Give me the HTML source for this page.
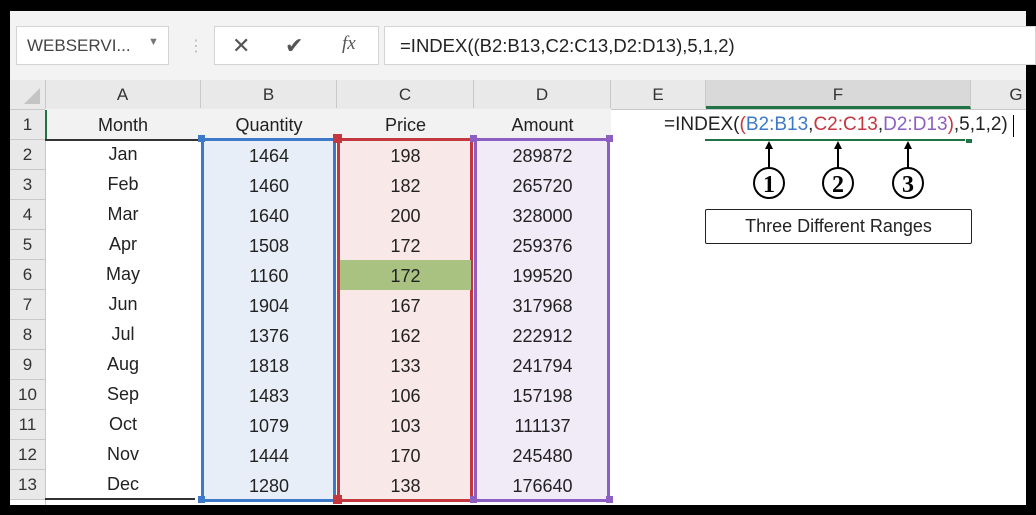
<!DOCTYPE html>
<html><head><style>
body{margin:0;width:1036px;height:515px;background:#000;position:relative;overflow:hidden;font-family:"Liberation Sans","DejaVu Sans",sans-serif}
.a{position:absolute}
.c{position:absolute;text-align:center;font-size:18px;color:#222;line-height:30px}
.rh{position:absolute;left:10px;width:35px;text-align:center;font-size:17px;color:#333;background:#e9e9e9;border-bottom:1px solid #c8c8c8;line-height:29px;height:29px}
.ch{position:absolute;top:80px;height:28px;line-height:30px;text-align:center;font-size:17px;color:#333;border-right:1px solid #c8c8c8}
.h{position:absolute;top:109px;height:30px;background:#f2f2f2}
.sq{position:absolute;width:7px;height:7px}
</style></head><body>
<div class="a" style="left:10px;top:11px;width:1016px;height:494px;background:#fff"></div>
<div class="a" style="left:10px;top:11px;width:1016px;height:97px;background:#f3f3f3"></div>
<div class="a" style="left:16px;top:26px;width:151px;height:37px;background:#fff;border:1px solid #d4d4d4"></div>
<div class="a" style="left:27px;top:36px;font-size:17px;color:#444">WEBSERVI...</div>
<div class="a" style="left:148px;top:36px;font-size:11px;color:#777">▼</div>
<div class="a" style="left:188px;top:36px;font-size:16px;color:#bbb">⋮</div>
<div class="a" style="left:214px;top:26px;width:163px;height:37px;background:#fff;border:1px solid #d4d4d4"></div>
<div class="a" style="left:232px;top:33px;font-size:22px;color:#555">✕</div>
<div class="a" style="left:285px;top:33px;font-size:22px;color:#555">✔</div>
<div class="a" style="left:342px;top:33px;font-size:19px;color:#555;font-family:'Liberation Serif',serif;font-style:italic">fx</div>
<div class="a" style="left:384px;top:26px;width:650px;height:37px;background:#fff;border:1px solid #d4d4d4"></div>
<div class="a" style="left:400px;top:35px;font-size:18.5px;color:#222">=INDEX((B2:B13,C2:C13,D2:D13),5,1,2)</div>
<div class="a" style="left:10px;top:80px;width:1016px;height:29px;background:#e9e9e9;border-bottom:1px solid #c8c8c8"></div>
<svg class="a" style="left:22px;top:88px" width="20" height="18"><polygon points="18,0 18,16 2,16" fill="#c4c4c4"/></svg>
<div class="ch" style="left:45px;width:155px">A</div>
<div class="ch" style="left:201px;width:135px">B</div>
<div class="ch" style="left:337px;width:136px">C</div>
<div class="ch" style="left:474px;width:136px">D</div>
<div class="ch" style="left:611px;width:94px">E</div>
<div class="ch" style="left:706px;width:264px;background:#d9d9d9;border-bottom:3px solid #217346;height:26px">F</div>
<div class="ch" style="left:971px;width:90px;border:none">G</div>
<div class="a" style="left:45px;top:80px;width:1px;height:425px;background:#c8c8c8"></div>
<div class="h" style="left:45px;width:156px"></div>
<div class="h" style="left:201px;width:136px"></div>
<div class="h" style="left:337px;width:137px"></div>
<div class="h" style="left:474px;width:137px"></div>
<div class="a" style="left:45px;top:110px;width:2px;height:29px;background:#217346"></div>
<div class="a" style="left:45px;top:139px;width:155px;height:2px;background:#333"></div>
<div class="a" style="left:45px;top:498px;width:150px;height:2px;background:#333"></div>
<div class="a" style="left:201px;top:138px;width:129px;height:358px;background:#e8eef8;border:3px solid #3d78c9"></div>
<div class="a" style="left:337px;top:138px;width:130px;height:358px;background:#f9e8e8;border:3px solid #c4373f"></div>
<div class="a" style="left:340px;top:260px;width:131px;height:30px;background:#a9c282"></div>
<div class="a" style="left:474px;top:138px;width:130px;height:358px;background:#f0ebf7;border:3px solid #8e5fc2"></div>
<div class="sq" style="left:198px;top:135px;background:#3d78c9"></div><div class="sq" style="left:198px;top:496px;background:#3d78c9"></div>
<div class="sq" style="left:333px;top:134px;width:9px;height:9px;background:#c4373f"></div><div class="sq" style="left:333px;top:495px;width:9px;height:9px;background:#c4373f"></div>
<div class="sq" style="left:470px;top:135px;background:#8e5fc2"></div><div class="sq" style="left:470px;top:496px;background:#8e5fc2"></div>
<div class="sq" style="left:606px;top:135px;background:#8e5fc2"></div><div class="sq" style="left:606px;top:496px;background:#8e5fc2"></div>
<div class="rh" style="top:110px">1</div><div class="rh" style="top:140px">2</div><div class="rh" style="top:170px">3</div><div class="rh" style="top:200px">4</div><div class="rh" style="top:230px">5</div><div class="rh" style="top:260px">6</div><div class="rh" style="top:290px">7</div><div class="rh" style="top:320px">8</div><div class="rh" style="top:350px">9</div><div class="rh" style="top:380px">10</div><div class="rh" style="top:410px">11</div><div class="rh" style="top:440px">12</div><div class="rh" style="top:470px">13</div>
<div class="c" style="left:45px;top:110px;width:156px">Month</div><div class="c" style="left:201px;top:110px;width:136px">Quantity</div><div class="c" style="left:337px;top:110px;width:137px">Price</div><div class="c" style="left:474px;top:110px;width:137px">Amount</div>
<div class="c" style="left:45px;top:139px;width:156px">Jan<br>Feb<br>Mar<br>Apr<br>May<br>Jun<br>Jul<br>Aug<br>Sep<br>Oct<br>Nov<br>Dec</div>
<div class="c" style="left:201px;top:141px;width:136px">1464<br>1460<br>1640<br>1508<br>1160<br>1904<br>1376<br>1818<br>1483<br>1079<br>1444<br>1280</div>
<div class="c" style="left:337px;top:141px;width:137px">198<br>182<br>200<br>172<br>172<br>167<br>162<br>133<br>106<br>103<br>170<br>138</div>
<div class="c" style="left:474px;top:141px;width:137px">289872<br>265720<br>328000<br>259376<br>199520<br>317968<br>222912<br>241794<br>157198<br>111137<br>245480<br>176640</div>
<div class="a" style="left:664px;top:114px;font-size:19px;color:#222;white-space:nowrap">=INDEX(<span style="color:#c4373f">(</span><span style="color:#3d78c9">B2:B13</span>,<span style="color:#c4373f">C2:C13</span>,<span style="color:#8e5fc2">D2:D13</span><span style="color:#c4373f">)</span>,5,1,2)</div>
<div class="a" style="left:1013px;top:115px;width:1px;height:22px;background:#000"></div>
<div class="a" style="left:705px;top:139px;width:260px;height:2px;background:#217346"></div>
<div class="a" style="left:966px;top:139px;width:6px;height:4px;background:#217346"></div>
<svg class="a" style="left:740px;top:140px" width="200" height="60">
<g stroke="#000" stroke-width="2" fill="none">
<line x1="29" y1="6" x2="29" y2="28"/><line x1="98" y1="6" x2="98" y2="28"/><line x1="168" y1="6" x2="168" y2="28"/>
<circle cx="29" cy="43" r="15"/><circle cx="98" cy="43" r="15"/><circle cx="168" cy="43" r="15"/></g>
<g fill="#000"><polygon points="29,1 25,9 33,9"/><polygon points="98,1 94,9 102,9"/><polygon points="168,1 164,9 172,9"/>
<text x="29" y="52" font-size="24" font-weight="bold" text-anchor="middle" font-family="Liberation Serif,serif">1</text>
<text x="98" y="52" font-size="24" font-weight="bold" text-anchor="middle" font-family="Liberation Serif,serif">2</text>
<text x="168" y="52" font-size="24" font-weight="bold" text-anchor="middle" font-family="Liberation Serif,serif">3</text></g></svg>
<div class="a" style="left:705px;top:209px;width:265px;height:33px;border:1px solid #222;border-radius:2px;background:#fff;text-align:center;line-height:33px;font-size:18px;color:#222">Three Different Ranges</div>
</body></html>
